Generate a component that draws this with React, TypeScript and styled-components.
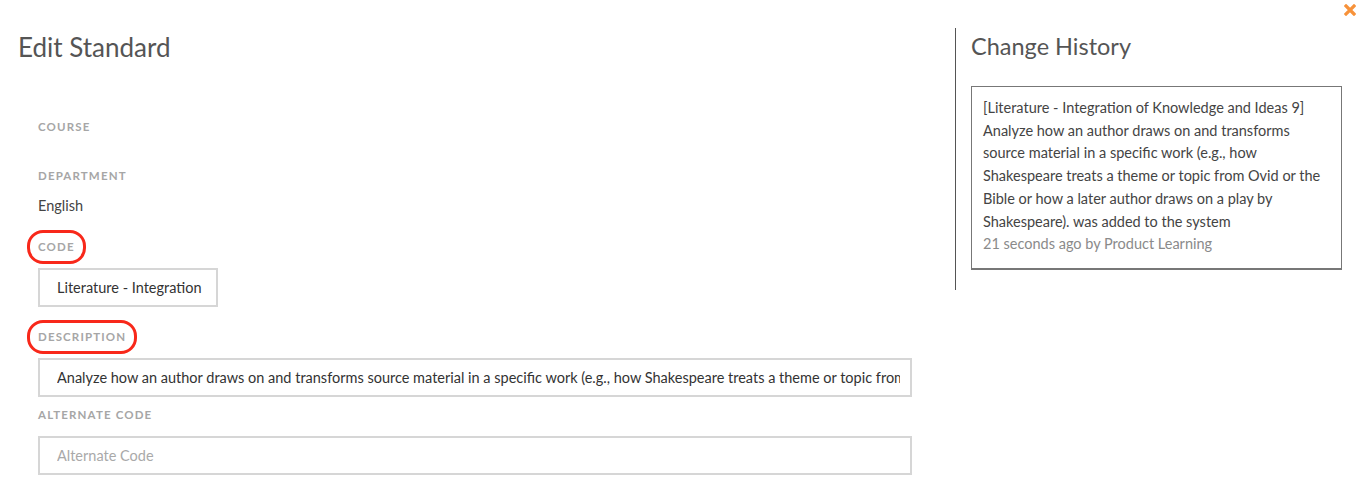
import React from "react";
import styled, { createGlobalStyle } from "styled-components";

const Global = createGlobalStyle`
  html, body { margin: 0; padding: 0; background: #fff; }
  body { font-family: Lato, "Open Sans", sans-serif; color: #444; }
  * { box-sizing: border-box; }
`;

const Page = styled.div`
  position: relative;
  display: flex;
  align-items: flex-start;
  width: 1360px;
  height: 482px;
  overflow: hidden;
`;

const Close = styled.button`
  position: absolute;
  top: 3px;
  right: 3px;
  width: 14px;
  height: 14px;
  padding: 0;
  border: 0;
  background: none;
  display: flex;
  align-items: center;
  justify-content: center;
  cursor: pointer;
`;

const LeftColumn = styled.section`
  width: 955px;
  padding: 31px 18px 0 18px;
`;

const Heading = styled.h1<{ $size: number }>`
  margin: 0;
  font-family: Lato, sans-serif;
  font-weight: 400;
  font-size: ${(p) => p.$size}px;
  line-height: 32px;
  color: #555;
`;

const Form = styled.div`
  display: flex;
  flex-direction: column;
  padding-left: 20px;
  padding-top: 56px;
  width: 894px;
`;

const Field = styled.div<{ $gap?: number }>`
  display: flex;
  flex-direction: column;
  margin-top: ${(p) => p.$gap ?? 0}px;
`;

const LabelRow = styled.div`
  display: flex;
`;

const Label = styled.label<{ $marked?: boolean }>`
  position: relative;
  display: inline-block;
  font-family: Lato, sans-serif;
  font-size: 11.5px;
  font-weight: 700;
  letter-spacing: 1.15px;
  line-height: 16px;
  color: #a6a6a6;
  text-transform: uppercase;
  ${(p) =>
    p.$marked &&
    `
    &::after {
      content: "";
      position: absolute;
      left: -11px;
      right: -11px;
      top: -9px;
      bottom: -9px;
      border: 3.5px solid #f8281a;
      border-radius: 16px;
    }
  `}
`;

const Value = styled.div`
  margin-top: 12px;
  font-size: 14.5px;
  line-height: 20px;
  color: #444;
`;

const Input = styled.input<{ $width?: number }>`
  margin-top: 13px;
  width: ${(p) => (p.$width ? `${p.$width}px` : "874px")};
  height: 39px;
  border: 2px solid #d6d6d6;
  padding: 0 10px 0 17px;
  font-family: Lato, sans-serif;
  font-size: 14.5px;
  color: #333;
  background: #fff;
  outline: none;
  &::placeholder { color: #a9a9a9; }
`;

const RightColumn = styled.aside`
  margin-top: 28px;
  height: 262px;
  border-left: 1px solid #555;
  padding: 2px 0 0 15px;
`;

const HistoryBox = styled.div`
  margin-top: 24px;
  width: 371px;
  border: 1px solid #777;
  border-bottom-width: 2px;
  padding: 10px 11px 12px 11px;
  font-size: 14.5px;
  line-height: 22.7px;
  color: #444;
  white-space: nowrap;
`;

const Meta = styled.div`
  color: #8a8a8a;
`;

export default function App() {
  return (
    <>
      <Global />
      <Page>
        <Close aria-label="Close">
          <svg width="12" height="12" viewBox="0 0 12 12">
            <path d="M2 2 L10 10 M10 2 L2 10" stroke="#f7923a" strokeWidth="3.2" strokeLinecap="square" />
          </svg>
        </Close>
        <LeftColumn>
          <Heading $size={26}>Edit Standard</Heading>
          <Form>
            <Field>
              <LabelRow><Label>Course</Label></LabelRow>
            </Field>
            <Field $gap={33}>
              <LabelRow><Label>Department</Label></LabelRow>
              <Value>English</Value>
            </Field>
            <Field $gap={23}>
              <LabelRow><Label $marked>Code</Label></LabelRow>
              <Input $width={180} defaultValue="Literature - Integration" />
            </Field>
            <Field $gap={22}>
              <LabelRow><Label $marked>Description</Label></LabelRow>
              <Input defaultValue="Analyze how an author draws on and transforms source material in a specific work (e.g., how Shakespeare treats a theme or topic from Ovid or the Bible or how a later author draws on a play by Shakespeare)." />
            </Field>
            <Field $gap={10}>
              <LabelRow><Label>Alternate Code</Label></LabelRow>
              <Input placeholder="Alternate Code" />
            </Field>
          </Form>
        </LeftColumn>
        <RightColumn>
          <Heading $size={23.5}>Change History</Heading>
          <HistoryBox>
            <div>
              [Literature - Integration of Knowledge and Ideas 9]
              <br />
              Analyze how an author draws on and transforms
              <br />
              source material in a specific work (e.g., how
              <br />
              Shakespeare treats a theme or topic from Ovid or the
              <br />
              Bible or how a later author draws on a play by
              <br />
              Shakespeare). was added to the system
            </div>
            <Meta>21 seconds ago by Product Learning</Meta>
          </HistoryBox>
        </RightColumn>
      </Page>
    </>
  );
}
